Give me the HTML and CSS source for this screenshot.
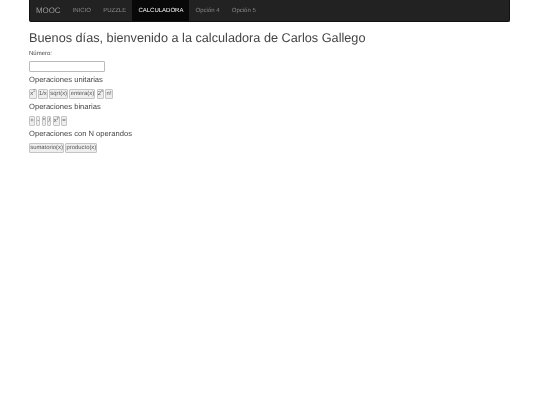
FILE: index.html
```html
<!DOCTYPE html>
<html lang="en">
<head>
<meta charset="UTF-8" />
<title>Calculadora</title>
<link rel="stylesheet" href="styles.css">
</head>
<body>

<!-- NAVBAR -->
<nav class="navbar">
  <a class="brand" href="#">MOOC</a>
  <a class="nav-link" href="#">INICIO</a>
  <a class="nav-link" href="#">PUZZLE</a>
  <a class="nav-link active" href="#">CALCULADORA</a>
  <a class="nav-link" href="#">Opción 4</a>
  <a class="nav-link" href="#">Opción 5</a>
</nav>

<!-- CALCULATOR -->
<div class="content">
  <h1>Buenos días, bienvenido a la calculadora de Carlos Gallego</h1>
  <label class="num-label" for="numero">Número:</label>
  <input class="num-input" type="text" id="numero" />

  <h2>Operaciones unitarias</h2>
  <div class="ops">
    <button>x<sup>2</sup></button>
    <button>1/x</button>
    <button>sqrt(x)</button>
    <button>entera(x)</button>
    <button>2<sup>x</sup></button>
    <button>n!</button>
  </div>

  <h2>Operaciones binarias</h2>
  <div class="ops">
    <button>+</button>
    <button>-</button>
    <button>*</button>
    <button>/</button>
    <button>x<sup>y</sup></button>
    <button>=</button>
  </div>

  <h2>Operaciones con N operandos</h2>
  <div class="ops">
    <button>sumatorio(x)</button>
    <button>producto(x)</button>
  </div>
</div>

</body>
</html>
```

FILE: styles.css
```css
* {
  box-sizing: border-box;
}
body {
  margin: 0;
  padding: 0 30px 0 29px;
  background: #fff;
  color: #444;
  font-family: "Liberation Sans", Arial, sans-serif;
  text-rendering: geometricPrecision;
}

/* NAVBAR */
.navbar {
  display: flex;
  align-items: stretch;
  height: 22px;
  background: #222;
  border: 1px solid #111;
  border-top: none;
  border-radius: 0 0 2px 2px;
  will-change: transform; /* own layer, so text edges stay grey */
}
.brand {
  display: flex;
  align-items: center;
  padding: 0 6px;
  font-size: 7.9px;
  color: #9d9d9d;
  text-decoration: none;
}
.nav-link {
  display: flex;
  align-items: center;
  padding: 0 6.1px;
  font-size: 6px;
  color: #8a8a8a;
  text-decoration: none;
}
.nav-link.active {
  background: #080808;
  color: #fff;
}

/* CONTENT */
.content {
  will-change: transform;
}
h1 {
  margin: 9px 0 0;
  font-size: 12.7px;
  line-height: 15px;
  font-weight: 400;
}
.num-label {
  display: block;
  margin-top: 4px;
  font-size: 6px;
  line-height: 8px;
}
.num-input {
  display: block;
  width: 76px;
  height: 11px;
  margin: 3px 0 2px;
  padding: 0;
  border: 1px solid #bbb;
  border-radius: 1px;
  background: #fff;
}
h2 {
  margin: 0;
  font-size: 7.6px;
  line-height: 12px;
  font-weight: 400;
}
.ops {
  display: flex;
  gap: 1.2px;
  margin-top: 3px;
  margin-bottom: 2px;
}
.ops button {
  height: 10px;
  padding: 0 0.2px;
  font-family: inherit;
  font-size: 5.9px;
  line-height: 8px;
  color: #555;
  background: #eee;
  border: 1px solid #c4c4c4;
  border-radius: 1px;
  text-rendering: geometricPrecision;
}
.ops sup {
  font-size: 4px;
  line-height: 0;
}
```
